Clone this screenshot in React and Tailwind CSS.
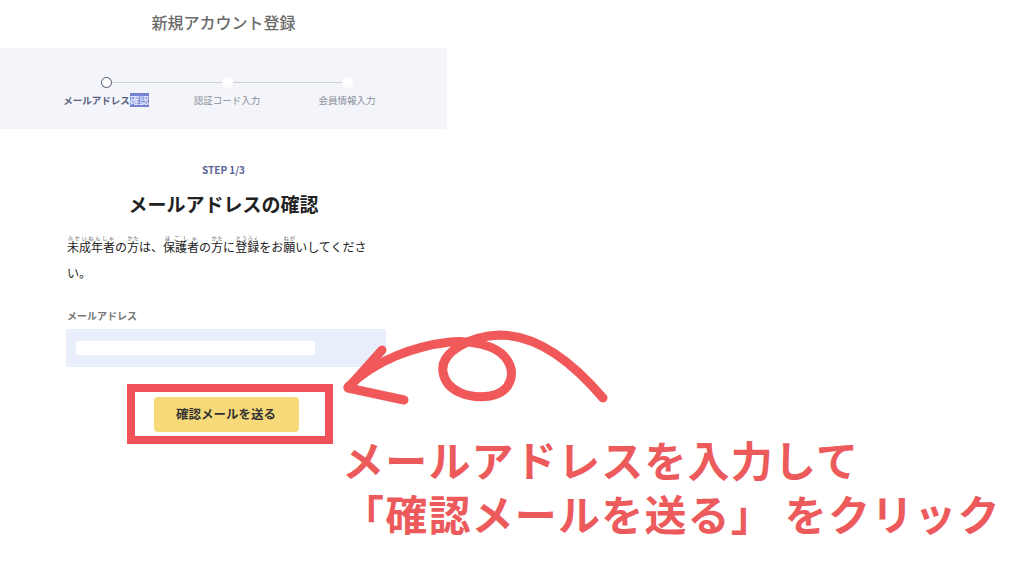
import React from "react";

const jp = { fontFamily: '"Noto Sans CJK JP", "Noto Sans", sans-serif' };

function Step({ active, children, className }) {
  return (
    <div className={"flex w-[96px] flex-col items-center " + className}>
      {active ? (
        <div className="h-[11px] w-[11px] rounded-full border-[1.5px] border-[#4f556e] bg-white" />
      ) : (
        <div className="h-[11px] w-[11px] rounded-full bg-white" />
      )}
      <div
        className={
          active
            ? "mt-[6px] whitespace-nowrap text-[9.5px] font-bold leading-[12px] text-[#59607f]"
            : "mt-[6px] whitespace-nowrap text-[9.5px] leading-[12px] text-[#8a8d98]"
        }
      >
        {children}
      </div>
    </div>
  );
}

function Steps() {
  return (
    <div className="relative h-[81px] bg-[#f4f5fa]">
      <div className="absolute left-[111px] top-[34px] h-px w-[112px] bg-[#cfd1d8]" />
      <div className="absolute left-[232px] top-[34px] h-px w-[111px] bg-[#cfd1d8]" />
      <div className="relative flex pt-[29px]">
        <Step active className="ml-[58px]">
          メールアドレス<span className="bg-[#7581cf] text-[#dfe3ff]">確認</span>
        </Step>
        <Step className="ml-[25px]">認証コード入力</Step>
        <Step className="ml-[24px]">会員情報入力</Step>
      </div>
    </div>
  );
}

function R({ b, t }) {
  return (
    <ruby>
      {b}
      <rt className="text-[5px] leading-[6px] text-[#555]">{t}</rt>
    </ruby>
  );
}

function Arrow() {
  return (
    <svg className="absolute left-0 top-0" width="1024" height="576" viewBox="0 0 1024 576" fill="none">
      <path
        d="M603 398 C 575 365, 540 335, 500 335 C 470 336, 440 352, 443 372 C 446 392, 470 399, 490 396 C 512 392, 517 372, 505 357 C 495 345, 470 340, 450 342 C 415 346, 375 360, 348 387"
        stroke="#f0585a"
        strokeWidth="9"
        strokeLinecap="round"
        strokeLinejoin="round"
      />
      <path d="M382 350 L 348 388 L 404 400" stroke="#f0585a" strokeWidth="9" strokeLinecap="round" strokeLinejoin="round" />
    </svg>
  );
}

export default function App() {
  return (
    <div className="relative h-[576px] w-[1024px] overflow-hidden bg-white" style={jp}>
      <div className="w-[447px]">
        <div className="pt-[10px] text-center text-[16px] font-medium leading-[24px] text-[#6b6b6b]">新規アカウント登録</div>
        <div className="mt-[14px]">
          <Steps />
        </div>
        <div className="mt-[34px] text-center text-[10px] font-bold leading-[14px] text-[#5b6394]">STEP 1/3</div>
        <div className="mt-[14px] text-center text-[19px] font-bold leading-[26px] text-[#222]">メールアドレスの確認</div>
        <div className="ml-[67px] mt-[17px] w-[320px] text-[12px] leading-[26px] text-[#222]">
          <R b="未成年者" t="みせいねんしゃ" />の<R b="方" t="かた" />は、<R b="保護者" t="ほごしゃ" />の<R b="方" t="かた" />に<R b="登録" t="とうろく" />をお<R b="願" t="ねが" />いしてくださ
          <br />
          い。
        </div>
        <div className="ml-[67px] mt-[23px] text-[10px] font-bold leading-[14px] text-[#777]">メールアドレス</div>
        <div className="ml-[66px] mt-[6px] flex h-[38px] w-[320px] items-center rounded-[2px] bg-[#e8effa] pl-[10px]">
          <div className="h-[14px] w-[239px] bg-white" />
        </div>
        <div className="ml-[127px] mt-[17px] flex h-[60px] w-[206px] items-center justify-center border-[8px] border-[#f0525a] pr-[8px]">
          <div className="flex h-[35px] w-[145px] items-center justify-center rounded-[4px] bg-[#f7d97a] text-[12.5px] font-bold text-[#333]">
            確認メールを送る
          </div>
        </div>
      </div>
      <Arrow />
      <div className="absolute left-[342px] top-[432px] text-[42px] font-bold leading-[54px] tracking-[1.2px] text-[#ec5a5c]">
        <div>メールアドレスを入力して</div>
        <div>「確認メールを送る」 をクリック</div>
      </div>
    </div>
  );
}
